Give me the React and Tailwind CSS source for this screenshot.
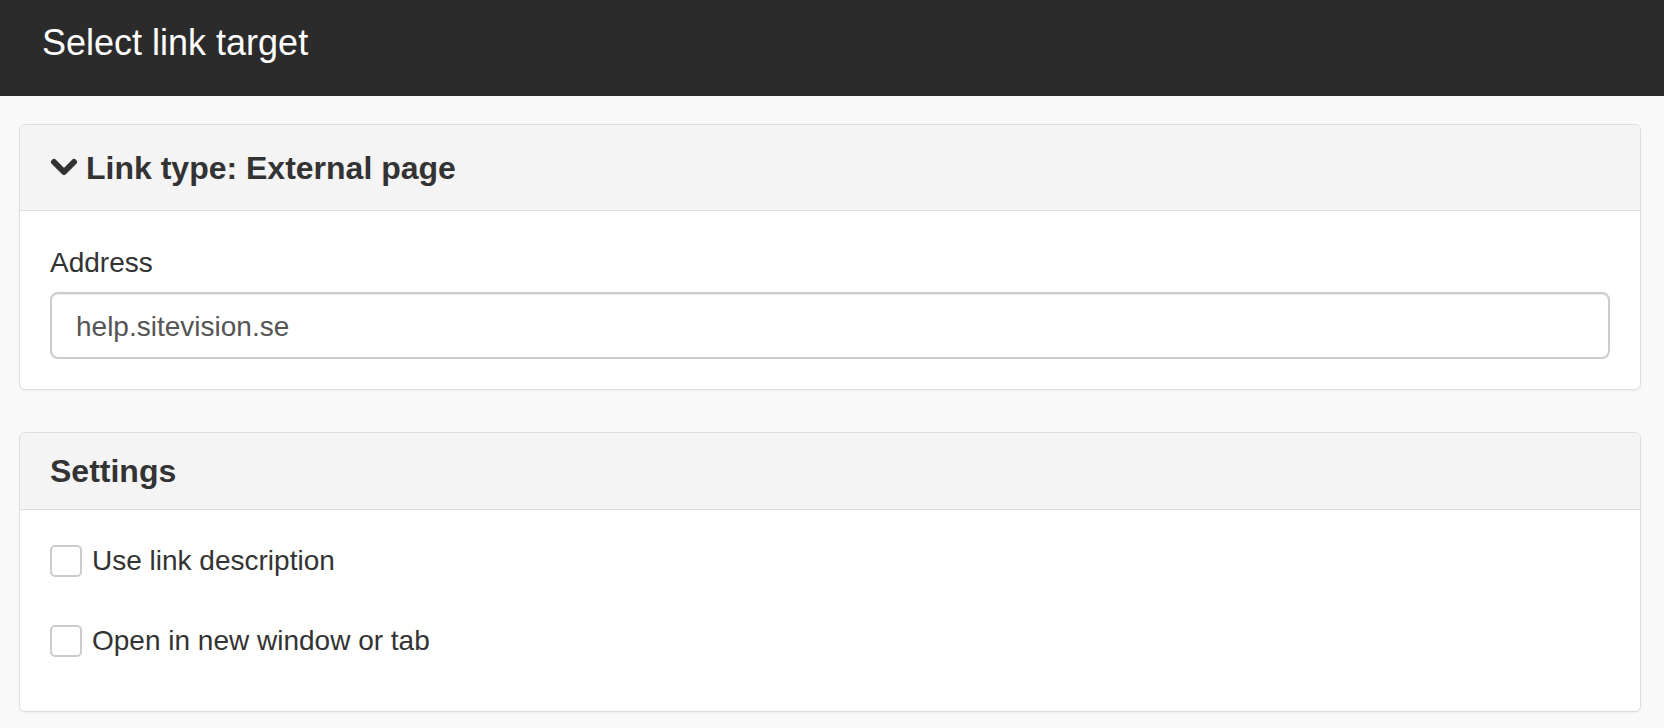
const ChevronDown = () => (
    <svg width="28" height="20" viewBox="0 0 28 20" className="shrink-0">
        <polyline
            points="4,4 14,14 24,4"
            fill="none"
            stroke="#333"
            strokeWidth="6"
            strokeLinecap="round"
            strokeLinejoin="round"
        />
    </svg>
);

const Checkbox = ({ label }) => (
    <label className="flex items-center h-[40px] gap-[10px] text-[28px] leading-[40px] text-[#333]">
        <span className="w-[32px] h-[32px] rounded-[5px] border-2 border-[#ccc] bg-white shrink-0" />
        <span>{label}</span>
    </label>
);

const App = () => {
    return (
        <div className="min-h-[728px] bg-[#f9f9f9] font-['Liberation_Sans',Arial,sans-serif] text-[#333]">
            {/* Title bar */}
            <header className="h-[96px] bg-[#2b2b2b] px-[42px] pt-[23px]">
                <h1 className="text-[36px] leading-[40px] text-white">Select link target</h1>
            </header>

            <main className="pl-[19px] pr-[23px] pt-[28px]">
                {/* Link type panel */}
                <section className="bg-white border border-[#ddd] rounded-[6px] overflow-hidden shadow-[0_1px_2px_rgba(0,0,0,0.05)]">
                    <div className="h-[86px] bg-[#f4f4f4] border-b border-[#ddd] flex items-center gap-[8px] px-[30px]">
                        <ChevronDown />
                        <h2 className="text-[32px] leading-[40px] font-bold">Link type: External page</h2>
                    </div>
                    <div className="px-[30px] pt-[32px] pb-[30px]">
                        <label className="block text-[28px] leading-[40px]">Address</label>
                        <input
                            type="text"
                            defaultValue="help.sitevision.se"
                            className="mt-[9px] block w-full h-[67px] px-[24px] pt-[2px] text-[28px] text-[#555] bg-white border-2 border-[#ccc] rounded-[8px] outline-none shadow-[inset_0_1px_1px_rgba(0,0,0,0.075)]"
                        />
                    </div>
                </section>

                {/* Settings panel */}
                <section className="mt-[42px] bg-white border border-[#ddd] rounded-[6px] overflow-hidden shadow-[0_1px_2px_rgba(0,0,0,0.05)]">
                    <div className="h-[77px] bg-[#f4f4f4] border-b border-[#ddd] flex items-center px-[30px]">
                        <h2 className="text-[32px] leading-[40px] font-bold">Settings</h2>
                    </div>
                    <div className="px-[30px] pt-[31px] pb-[50px] flex flex-col gap-[40px]">
                        <Checkbox label="Use link description" />
                        <Checkbox label="Open in new window or tab" />
                    </div>
                </section>
            </main>
        </div>
    );
};

export default App;
